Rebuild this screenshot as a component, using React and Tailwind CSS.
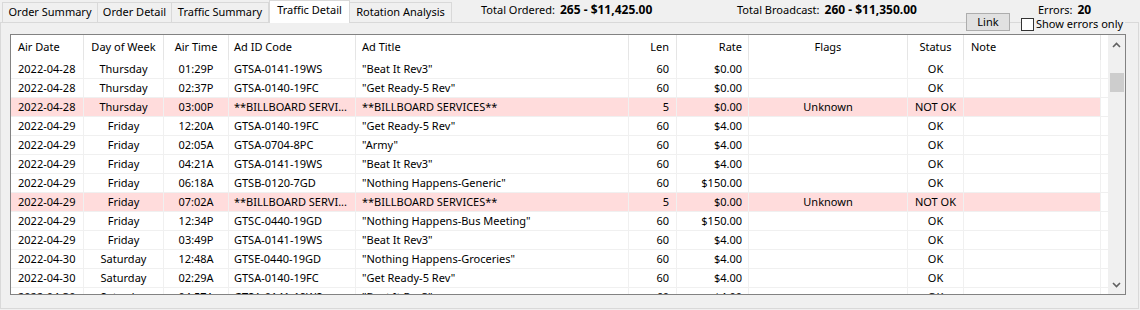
const columns = [
  { key: 'date', label: 'Air Date', w: 'w-[73px]', align: 'text-left pl-[7px]' },
  { key: 'day', label: 'Day of Week', w: 'w-[80px]', align: 'text-center' },
  { key: 'time', label: 'Air Time', w: 'w-[65px]', align: 'text-center' },
  { key: 'code', label: 'Ad ID Code', w: 'w-[127px]', align: 'text-left pl-[5px]' },
  { key: 'title', label: 'Ad Title', w: 'w-[273px]', align: 'text-left pl-[6px]' },
  { key: 'len', label: 'Len', w: 'w-[48px]', align: 'text-right pr-[7px]' },
  { key: 'rate', label: 'Rate', w: 'w-[72px]', align: 'text-right pr-[6px]' },
  { key: 'flags', label: 'Flags', w: 'w-[159px]', align: 'text-center' },
  { key: 'status', label: 'Status', w: 'w-[56px]', align: 'text-center' },
  { key: 'note', label: 'Note', w: 'w-[137px]', align: 'text-left pl-[7px]' },
];

const rows = [
  ['2022-04-28', 'Thursday', '01:29P', 'GTSA-0141-19WS', '"Beat It Rev3"', '60', '$0.00', '', 'OK', ''],
  ['2022-04-28', 'Thursday', '02:37P', 'GTSA-0140-19FC', '"Get Ready-5 Rev"', '60', '$0.00', '', 'OK', ''],
  ['2022-04-28', 'Thursday', '03:00P', '**BILLBOARD SERVI...', '**BILLBOARD SERVICES**', '5', '$0.00', 'Unknown', 'NOT OK', ''],
  ['2022-04-29', 'Friday', '12:20A', 'GTSA-0140-19FC', '"Get Ready-5 Rev"', '60', '$4.00', '', 'OK', ''],
  ['2022-04-29', 'Friday', '02:05A', 'GTSA-0704-8PC', '"Army"', '60', '$4.00', '', 'OK', ''],
  ['2022-04-29', 'Friday', '04:21A', 'GTSA-0141-19WS', '"Beat It Rev3"', '60', '$4.00', '', 'OK', ''],
  ['2022-04-29', 'Friday', '06:18A', 'GTSB-0120-7GD', '"Nothing Happens-Generic"', '60', '$150.00', '', 'OK', ''],
  ['2022-04-29', 'Friday', '07:02A', '**BILLBOARD SERVI...', '**BILLBOARD SERVICES**', '5', '$0.00', 'Unknown', 'NOT OK', ''],
  ['2022-04-29', 'Friday', '12:34P', 'GTSC-0440-19GD', '"Nothing Happens-Bus Meeting"', '60', '$150.00', '', 'OK', ''],
  ['2022-04-29', 'Friday', '03:49P', 'GTSA-0141-19WS', '"Beat It Rev3"', '60', '$4.00', '', 'OK', ''],
  ['2022-04-30', 'Saturday', '12:48A', 'GTSE-0440-19GD', '"Nothing Happens-Groceries"', '60', '$4.00', '', 'OK', ''],
  ['2022-04-30', 'Saturday', '02:29A', 'GTSA-0140-19FC', '"Get Ready-5 Rev"', '60', '$4.00', '', 'OK', ''],
  ['2022-04-30', 'Saturday', '04:57A', 'GTSA-0141-19WS', '"Beat It Rev3"', '60', '$4.00', '', 'OK', ''],
];

const Chevron = ({ up }) => (
  <svg width="9" height="6" viewBox="0 0 9 6" className="block">
    <path
      d={up ? 'M1 5 L4.5 1.5 L8 5' : 'M1 1 L4.5 4.5 L8 1'}
      fill="none"
      stroke="#606060"
      strokeWidth="1.6"
    />
  </svg>
);

const Tab = ({ children, className }) => (
  <div className={`flex items-center justify-center border-[#d9d9d9] ${className}`}>
    {children}
  </div>
);

export default function App() {
  return (
    <div className="relative w-[1140px] h-[310px] bg-[#f0f0f0] text-[11px] text-black font-['Noto_Sans',sans-serif] overflow-hidden">
      {/* tab strip + totals */}
      <div className="flex h-[22px]">
        <div className="flex items-end pl-[2px]">
          <Tab className="w-[95px] h-[20px] border-l border-t">Order Summary</Tab>
          <Tab className="w-[74px] h-[20px] border-l border-t">Order Detail</Tab>
          <Tab className="w-[98px] h-[20px] border-x border-t">Traffic Summary</Tab>
          <Tab className="relative z-10 w-[81px] h-[23px] -mb-[1px] pb-[3px] bg-white border-x border-t">
            Traffic Detail
          </Tab>
          <Tab className="w-[102px] h-[20px] border-r border-t">Rotation Analysis</Tab>
        </div>
        <div className="flex items-start pt-[2px] pl-[29px] leading-[16px]">
          <div className="w-[256px] flex gap-[5px]">
            <span>Total Ordered:</span>
            <span className="font-bold text-[12px]">265 - $11,425.00</span>
          </div>
          <div className="w-[301px] flex gap-[5px]">
            <span>Total Broadcast:</span>
            <span className="font-bold text-[12px]">260 - $11,350.00</span>
          </div>
          <div className="flex gap-[5px]">
            <span>Errors:</span>
            <span className="font-bold text-[12px]">20</span>
          </div>
        </div>
      </div>

      {/* tab page */}
      <div className="w-[1139px] h-[287px] border border-[#d9d9d9] pl-[9px] pt-[11px]">
        <div className="flex w-[1116px] h-[261px] border border-[#828282] bg-white">
          <div className="w-[1097px] overflow-hidden">
            {/* header */}
            <div className="flex h-[25px] leading-[24px]">
              {columns.map((c) => (
                <div key={c.key} className={`${c.w} ${c.align} shrink-0 border-r border-[#e5e5e5] whitespace-nowrap`}>
                  {c.label}
                </div>
              ))}
            </div>
            {/* rows */}
            {rows.map((r, i) => {
              const bad = r[8] === 'NOT OK';
              return (
                <div key={i} className="flex h-[19px] leading-[18px]">
                  {columns.map((c, j) => (
                    <div
                      key={c.key}
                      className={`${c.w} ${c.align} shrink-0 h-[19px] border-r border-b border-[#f0f0f0] whitespace-nowrap overflow-hidden ${bad ? 'bg-[#ffdcdc]' : ''}`}
                    >
                      {r[j]}
                    </div>
                  ))}
                  <div className="flex-1 border-b border-[#f0f0f0]" />
                </div>
              );
            })}
          </div>
          {/* vertical scrollbar */}
          <div className="w-[17px] bg-[#f0f0f0] flex flex-col items-center">
            <div className="h-[17px] flex items-center justify-center mt-[1px]">
              <Chevron up />
            </div>
            <div className="w-[14px] h-[19px] mt-[20px] bg-[#cdcdcd]" />
            <div className="flex-1" />
            <div className="h-[17px] flex items-center justify-center mb-[1px]">
              <Chevron />
            </div>
          </div>
        </div>
      </div>

      {/* controls sitting on the page border */}
      <button className="absolute left-[966px] top-[13px] w-[44px] h-[18px] bg-[#e1e1e1] border border-[#adadad] leading-[16px] text-center">
        Link
      </button>
      <label className="absolute left-[1021px] top-[15px] flex items-center gap-[2px] pr-[2px] bg-[#f0f0f0] leading-[18px]">
        <span className="w-[13px] h-[13px] border border-[#333333] bg-white" />
        <span>Show errors only</span>
      </label>
    </div>
  );
}
